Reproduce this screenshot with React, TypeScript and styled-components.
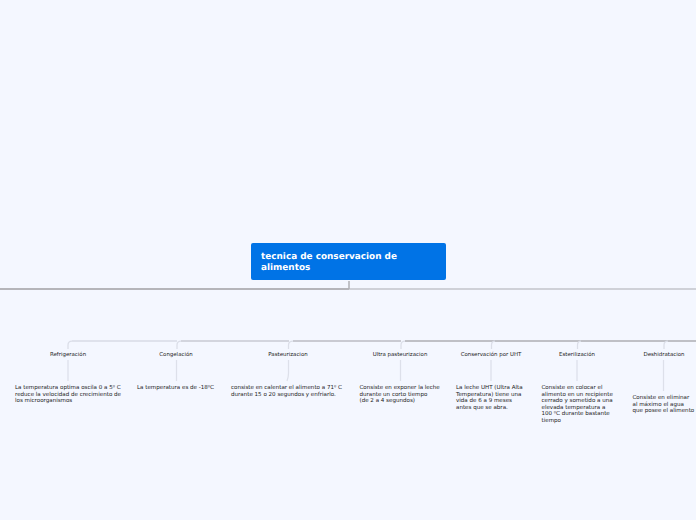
import styled, { createGlobalStyle } from "styled-components";

const GlobalStyle = createGlobalStyle`
  html, body {
    margin: 0;
    padding: 0;
    background: #f4f7ff;
  }
`;

const Canvas = styled.div`
  position: relative;
  width: 696px;
  height: 520px;
  overflow: hidden;
  background: #f4f7ff;
  font-family: "DejaVu Sans", sans-serif;
  text-rendering: geometricPrecision;
  color: #111;
`;

const Wires = styled.svg`
  position: absolute;
  inset: 0;
`;

const RootNode = styled.div`
  position: absolute;
  left: 251px;
  top: 243px;
  width: 195px;
  height: 37px;
  box-sizing: border-box;
  padding: 9px 10px 7px;
  border-radius: 2px;
  background: #0073e6;
  color: #fff;
  font-size: 8.9px;
  font-weight: 700;
  line-height: 11px;
`;

const Topic = styled.div<{ $x: number; $y: number }>`
  position: absolute;
  left: ${(p) => p.$x}px;
  top: ${(p) => p.$y}px;
  transform: translateX(-50%);
  padding: 0 2px;
  background: #f4f7ff;
  font-size: 5.45px;
  line-height: 7px;
  white-space: nowrap;
  color: #222;
`;

const Detail = styled.div<{ $x: number; $y: number }>`
  position: absolute;
  left: ${(p) => p.$x}px;
  top: ${(p) => p.$y}px;
  font-size: 5.55px;
  line-height: 6.5px;
  white-space: pre;
  color: #1a1a1a;
`;

const topics = [
  { label: "Refrigeración", x: 68, y: 352 },
  { label: "Congelación", x: 176, y: 352 },
  { label: "Pasteurizacion", x: 288, y: 352 },
  { label: "Ultra pasteurizacion", x: 400, y: 352 },
  { label: "Conservación por UHT", x: 491, y: 352 },
  { label: "Esterilización", x: 577, y: 352 },
  { label: "Deshidratacion", x: 664, y: 352 },
];

const details = [
  { x: 15, y: 385, text: "La temperatura optima oscila 0 a 5⁰ C\nreduce la velocidad de crecimiento de\nlos microorganismos" },
  { x: 137, y: 385, text: "La temperatura es de -18⁰C" },
  { x: 231, y: 385, text: "consiste en calentar el alimento a 71⁰ C\ndurante 15 o 20 segundos y enfriarlo." },
  { x: 359.5, y: 385, text: "Consiste en exponer la leche\ndurante un corto tiempo\n(de 2 a 4 segundos)" },
  { x: 456, y: 385, text: "La leche UHT (Ultra Alta\nTemperatura) tiene una\nvida de 6 a 9 meses\nantes que se abra." },
  { x: 541.5, y: 385, text: "Consiste en colocar el\nalimento en un recipiente\ncerrado y sometido a una\nelevada temperatura a\n100 ⁰C durante bastante\ntiempo" },
  { x: 632.5, y: 395, text: "Consiste en eliminar\nal máximo el agua\nque posee el alimento" },
];

export default function App() {
  return (
    <Canvas>
      <GlobalStyle />
      <Wires width="696" height="520" fill="none">
        <path d="M0 289H349" stroke="#b5b5ba" strokeWidth="2" />
        <path d="M349 289H696" stroke="#cfd1d8" strokeWidth="2" />
        <path d="M349 281V289" stroke="#b0b0b4" strokeWidth="1.5" />
        <path d="M72 341H177" stroke="#dfe2ec" strokeWidth="2" />
        <path d="M181 341H289" stroke="#d3d5de" strokeWidth="2" />
        <path d="M293 341H401" stroke="#c9cad2" strokeWidth="2" />
        <path d="M405 341H696" stroke="#bfc0c6" strokeWidth="2" />
        <path d="M68 349V345Q68 341 72 341M177 349V345Q177 341 181 341M288.500 349V345Q288.500 341 293 341M401 349V345Q401 341 405 341M491.500 349V345Q491.500 341 495 341M577.500 349V345Q577.500 341 581 341M664 349V345Q664 341 668 341" stroke="#dbdee8" strokeWidth="1.25" />
        <path d="M68 360V381M176.500 360V381M400.500 360V381M491 360V381M577 360V381M663.500 360V391" stroke="#dde0ea" strokeWidth="1.25" />
        <path d="M288.500 360V373Q288.500 377 287 381" stroke="#dde0ea" strokeWidth="1.25" />
      </Wires>
      <RootNode>tecnica de conservacion de alimentos</RootNode>
      {topics.map((t) => (
        <Topic key={t.label} $x={t.x} $y={t.y}>{t.label}</Topic>
      ))}
      {details.map((d) => (
        <Detail key={d.x} $x={d.x} $y={d.y}>{d.text}</Detail>
      ))}
    </Canvas>
  );
}
